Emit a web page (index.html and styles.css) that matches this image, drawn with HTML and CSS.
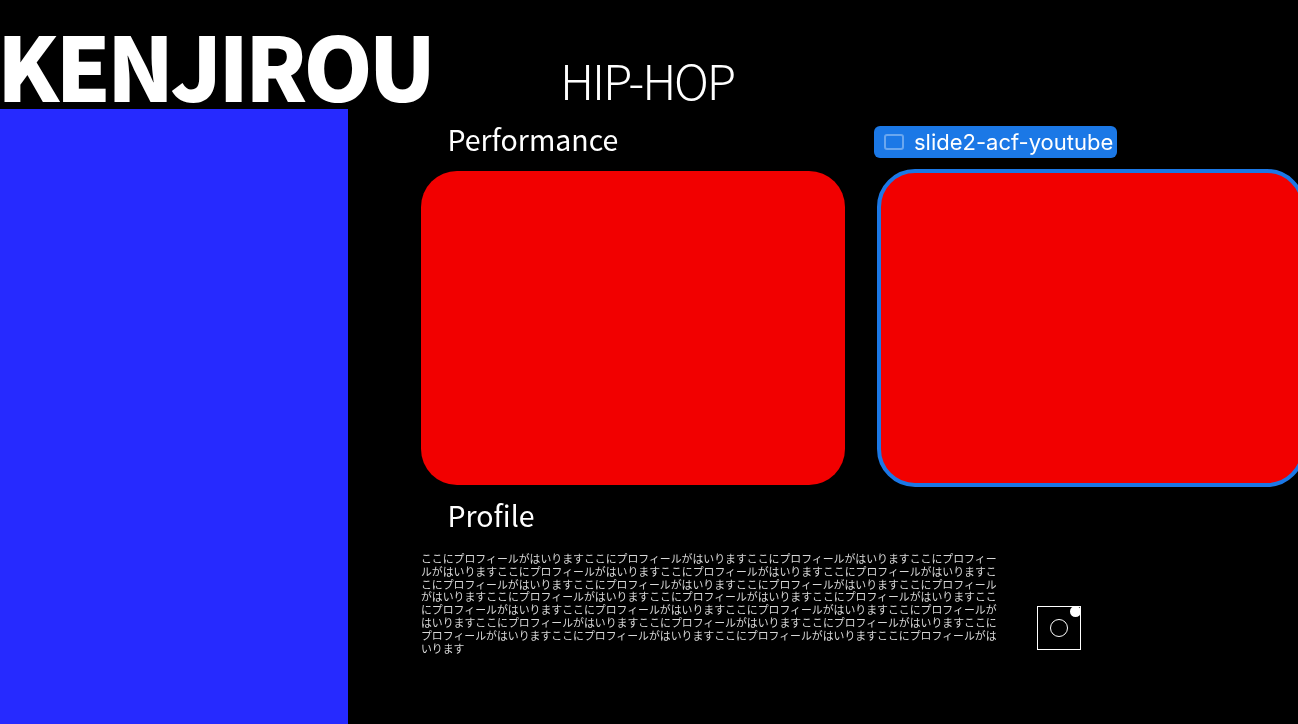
FILE: index.html
```html
<!DOCTYPE html>
<html lang="ja">
<head>
<meta charset="utf-8">
<title>KENJIROU</title>
<link rel="stylesheet" href="styles.css">
</head>
<body>
<div class="page">
  <header class="header">
    <h1 class="name">KENJIROU</h1>
    <p class="genre">HIP-HOP</p>
  </header>
  <div class="body">
    <aside class="photo"></aside>
    <main class="content">
      <div class="grid">
        <h2 class="title">Performance</h2>
        <div class="label-cell">
          <span class="chip">
            <svg class="chip-icon" width="20" height="16" viewBox="0 0 20 16" aria-hidden="true"><rect x="1" y="1" width="18" height="14" rx="2" fill="none" stroke="currentColor" stroke-width="2"/></svg>
            <span>slide2-acf-youtube</span>
          </span>
        </div>
        <div class="video"></div>
        <div class="video selected"></div>
      </div>
      <h2 class="title profile-title">Profile</h2>
      <div class="profile-row">
        <p class="profile-text">ここにプロフィールがはいりますここにプロフィールがはいりますここにプロフィールがはいりますここにプロフィールがはいりますここにプロフィールがはいりますここにプロフィールがはいりますここにプロフィールがはいりますここにプロフィールがはいりますここにプロフィールがはいりますここにプロフィールがはいりますここにプロフィールがはいりますここにプロフィールがはいりますここにプロフィールがはいりますここにプロフィールがはいりますここにプロフィールがはいりますここにプロフィールがはいりますここにプロフィールがはいりますここにプロフィールがはいりますここにプロフィールがはいりますここにプロフィールがはいりますここにプロフィールがはいりますここにプロフィールがはいりますここにプロフィールがはいりますここにプロフィールがはいりますここにプロフィールがはいります</p>
        <div class="insta">
          <span class="insta-lens"></span>
          <span class="insta-dot"></span>
        </div>
      </div>
    </main>
  </div>
</div>
</body>
</html>
```
FILE: styles.css
```css
* { box-sizing: border-box; }
html, body { margin: 0; padding: 0; height: 100%; background: #000; }
body { overflow: hidden; color: #fff; font-family: "Noto Sans CJK JP", "Noto Sans", sans-serif; }
.page { display: flex; flex-direction: column; width: 1298px; height: 724px; overflow: hidden; will-change: transform; }
.header { display: flex; align-items: flex-start; height: 109px; flex: none; }
.name { margin: 0 0 0 -3px; padding-top: 19px; width: 563px; flex: none; font-size: 88px; font-weight: 900; line-height: 90px; letter-spacing: -3.85px; white-space: nowrap; }
.genre { margin: 0; padding-top: 49px; font-size: 48px; font-weight: 300; line-height: 60px; letter-spacing: -2.1px; white-space: nowrap; }
.body { display: flex; flex: 1; min-height: 0; }
.photo { width: 347.5px; flex: none; background: #262aff; }
.content { flex: 1; min-width: 0; padding-left: 73.5px; overflow: hidden; }
.grid { display: grid; grid-template-columns: 423.5px 424px; column-gap: 34.5px; grid-template-rows: 62px 314px; width: 882px; }
.title { margin: 0 0 0 -0.5px; padding-left: 27px; font-size: 28.5px; font-weight: 400; line-height: 40px; white-space: nowrap; }
.grid .title { padding-top: 10px; }
.label-cell { display: flex; align-items: flex-start; margin-left: -5px; padding-top: 17px; }
.chip { display: inline-flex; align-items: center; gap: 10px; height: 32px; padding: 0 4px 0 10px; border-radius: 6px; background: #1b78e6; color: #fff; font-family: Inter, sans-serif; font-size: 22px; white-space: nowrap; }
.chip-icon { color: rgba(255,255,255,.35); flex: none; }
.video { height: 314px; border-radius: 36px; background: #f20000; }
.selected { outline: 4px solid #1b78e6; outline-offset: -2px; }
.profile-title { margin-top: 10px; }
.profile-row { display: flex; align-items: flex-start; margin-top: 17px; }
.profile-text { margin: 0; width: 576px; flex: none; font-size: 10.88px; font-weight: 400; line-height: 12.8px; color: #d8d8d8; word-break: break-all; line-break: anywhere; }
.insta { position: relative; width: 44px; height: 44px; margin: 54px 0 0 40px; border: 1px solid #fff; flex: none; }
.insta-lens { position: absolute; left: 12px; top: 12px; width: 18px; height: 18px; border: 1px solid #fff; border-radius: 50%; }
.insta-dot { position: absolute; right: -1px; top: -1px; width: 11px; height: 11px; border-radius: 50%; background: #fff; }
```
